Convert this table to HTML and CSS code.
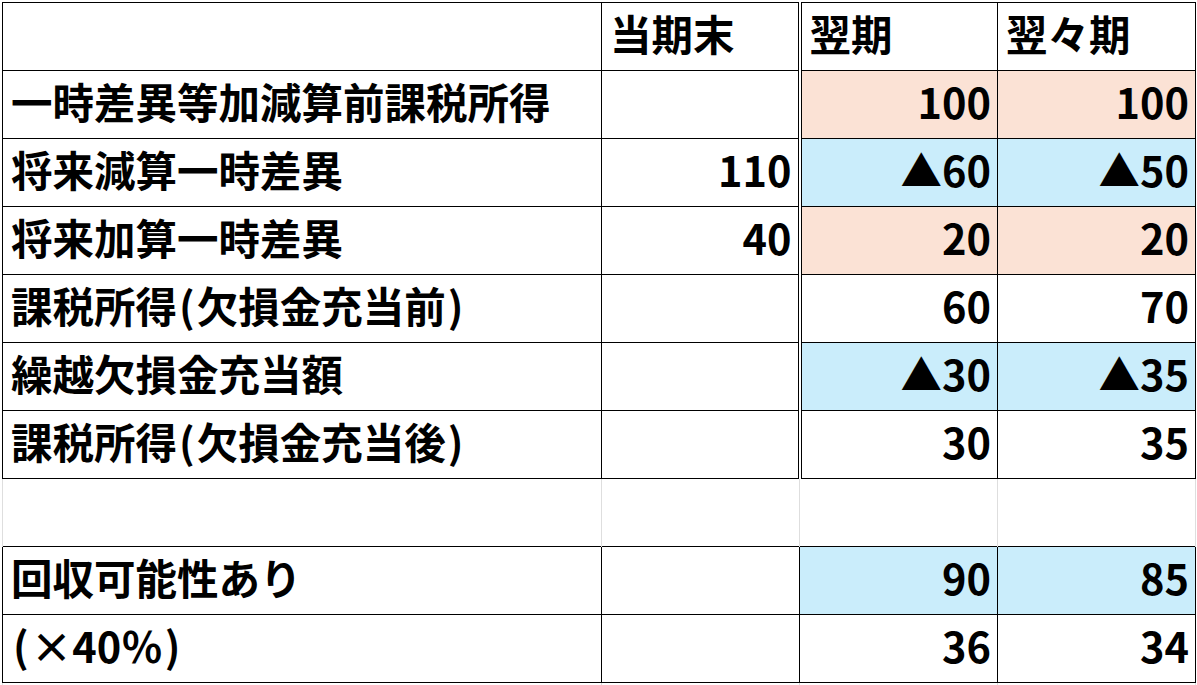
FILE: index.html
```html
<!DOCTYPE html>
<html lang="ja">
<head>
<meta charset="utf-8">
<title>繰延税金資産の回収可能性</title>
<link rel="stylesheet" href="styles.css">
</head>
<body>
<div class="sheet">
<table class="grid">
  <colgroup>
    <col class="c-label">
    <col class="c-num">
    <col class="c-num">
    <col class="c-num">
  </colgroup>
  <tbody>
    <tr>
      <td></td>
      <td class="head">当期末</td>
      <td class="head dbl">翌期</td>
      <td class="head">翌々期</td>
    </tr>
    <tr>
      <td>一時差異等加減算前課税所得</td>
      <td class="num"></td>
      <td class="num dbl peach">100</td>
      <td class="num peach">100</td>
    </tr>
    <tr>
      <td>将来減算一時差異</td>
      <td class="num">110</td>
      <td class="num dbl blue">▲60</td>
      <td class="num blue">▲50</td>
    </tr>
    <tr>
      <td>将来加算一時差異</td>
      <td class="num">40</td>
      <td class="num dbl peach">20</td>
      <td class="num peach">20</td>
    </tr>
    <tr>
      <td>課税所得<span class="paren">(</span>欠損金充当前<span class="paren">)</span></td>
      <td class="num"></td>
      <td class="num dbl">60</td>
      <td class="num">70</td>
    </tr>
    <tr>
      <td>繰越欠損金充当額</td>
      <td class="num"></td>
      <td class="num dbl blue">▲30</td>
      <td class="num blue">▲35</td>
    </tr>
    <tr>
      <td>課税所得<span class="paren">(</span>欠損金充当後<span class="paren">)</span></td>
      <td class="num"></td>
      <td class="num dbl">30</td>
      <td class="num">35</td>
    </tr>
    <tr class="blank">
      <td></td><td></td><td></td><td></td>
    </tr>
    <tr>
      <td>回収可能性あり</td>
      <td class="num"></td>
      <td class="num blue">90</td>
      <td class="num blue">85</td>
    </tr>
    <tr>
      <td><span class="paren">(</span>×40％<span class="paren">)</span></td>
      <td class="num"></td>
      <td class="num">36</td>
      <td class="num">34</td>
    </tr>
    <tr class="blank tail">
      <td></td><td></td><td></td><td></td>
    </tr>
  </tbody>
</table>
</div>
</body>
</html>
```
FILE: styles.css
```css
html, body {
  margin: 0;
  padding: 0;
  background: #ffffff;
}

.sheet {
  padding: 2px 0 0 2px;
}

.grid {
  border-collapse: collapse;
  table-layout: fixed;
  width: 1194px;
  font-family: "Noto Sans CJK JP", "Noto Sans", sans-serif;
  font-weight: 700;
  font-size: 41.5px;
  line-height: 1;
  color: #000000;
}

.c-label { width: 599px; }
.c-num { width: 198px; }

.grid td {
  height: 61px;
  padding: 0 6px 6px 8px;
  border: 1px solid #000000;
  white-space: nowrap;
  overflow: hidden;
  vertical-align: middle;
  text-align: left;
}

.grid td.num {
  text-align: right;
}

.grid td.dbl {
  border-left: 4px double #000000;
}

.paren {
  padding: 0 2px;
}

.peach { background: #fbe2d5; }
.blue { background: #caedfb; }

.grid tr.blank td {
  border-top: none;
  border-bottom: none;
  border-left: 1px solid #dedede;
  border-right: 1px solid #dedede;
}

.grid tr.tail td {
  height: 20px;
}
```
